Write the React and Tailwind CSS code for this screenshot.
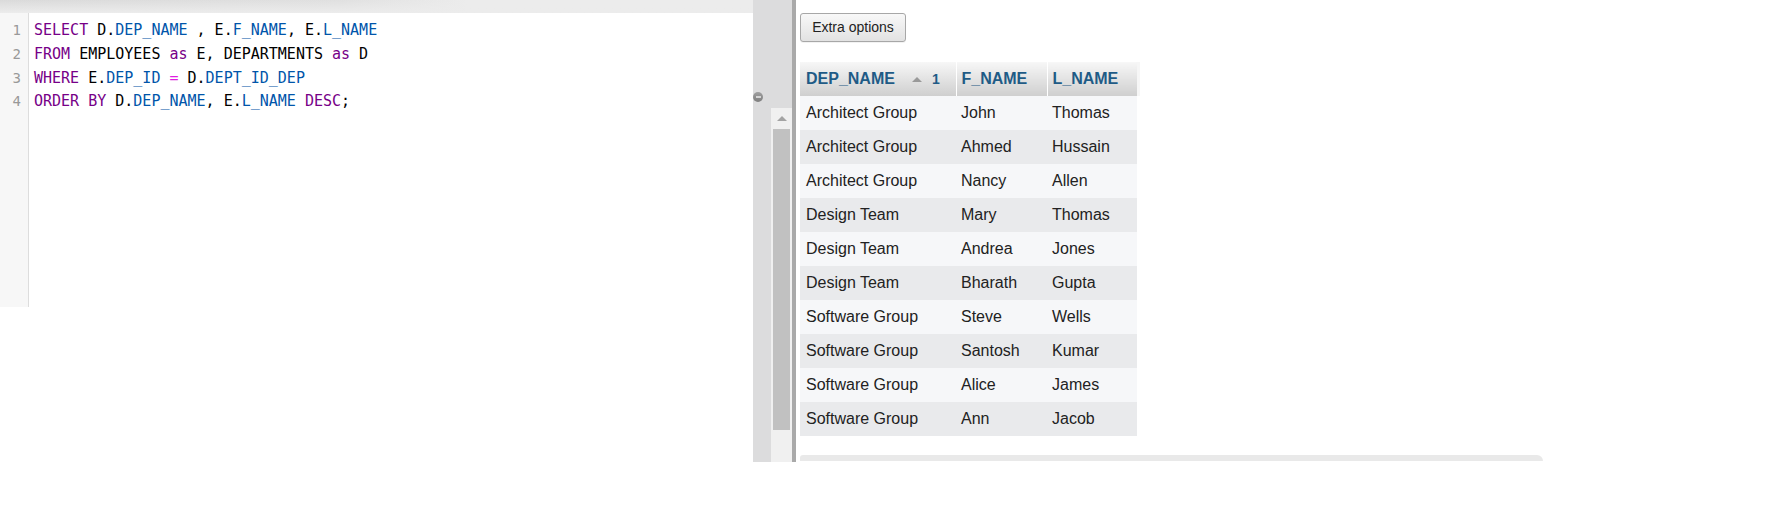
import React from "react";

const rows = [
  ["Architect Group", "John", "Thomas"],
  ["Architect Group", "Ahmed", "Hussain"],
  ["Architect Group", "Nancy", "Allen"],
  ["Design Team", "Mary", "Thomas"],
  ["Design Team", "Andrea", "Jones"],
  ["Design Team", "Bharath", "Gupta"],
  ["Software Group", "Steve", "Wells"],
  ["Software Group", "Santosh", "Kumar"],
  ["Software Group", "Alice", "James"],
  ["Software Group", "Ann", "Jacob"],
];

const K = ({ children }) => <span className="text-[#770088]">{children}</span>;
const V = ({ children }) => <span className="text-[#0055aa]">{children}</span>;
const O = ({ children }) => <span className="text-[#e01ee0]">{children}</span>;

export default function App() {
  return (
    <div className="w-[1788px] h-[523px] bg-white flex overflow-hidden font-['Liberation_Sans',Arial,sans-serif]">
      {/* Left editor column */}
      <div className="w-[753px] flex flex-col">
        <div className="h-[13px] bg-[#ececec] relative">
          <div className="absolute inset-0 bg-[linear-gradient(90deg,#dadada_0%,#e0e0e0_45%,#ececec_62%)]" />
          <div className="absolute inset-0 bg-gradient-to-b from-transparent to-[#ececec]" />
        </div>
        <div className="flex h-[294px]">
          <div className="w-[29px] bg-[#f7f7f7] border-r border-[#dddddd] pt-[6px] flex flex-col items-end pr-[7px] font-['DejaVu_Sans_Mono',monospace] text-[14px] leading-[23.8px] text-[#999999]">
            <div>1</div>
            <div>2</div>
            <div>3</div>
            <div>4</div>
          </div>
          <div className="flex-1 pl-[5px] pt-[6px] font-['DejaVu_Sans_Mono',monospace] text-[15px] leading-[23.8px] text-black whitespace-pre">
            <div>
              <K>SELECT</K> D.<V>DEP_NAME</V> , E.<V>F_NAME</V>, E.<V>L_NAME</V>
            </div>
            <div>
              <K>FROM</K> EMPLOYEES <K>as</K> E, DEPARTMENTS <K>as</K> D
            </div>
            <div>
              <K>WHERE</K> E.<V>DEP_ID</V> <O>=</O> D.<V>DEPT_ID_DEP</V>
            </div>
            <div>
              <K>ORDER</K> <K>BY</K> D.<V>DEP_NAME</V>, E.<V>L_NAME</V> <K>DESC</K>;
            </div>
          </div>
        </div>
      </div>

      {/* Divider with scrollbar */}
      <div className="w-[39px] h-[462px] bg-[#dcdcdd] flex flex-col">
        <div className="h-[92px]" />
        <div className="flex">
          <div className="w-[10px] h-[10px] rounded-full bg-gradient-to-b from-[#a0a0a0] to-[#7e7e7e] flex items-center justify-center">
            <div className="w-[5px] h-[2px] bg-[#d4d4d4]" />
          </div>
        </div>
        <div className="h-[6px]" />
        <div className="flex flex-1">
          <div className="w-[18px]" />
          <div className="w-[21px] bg-[#f0f0f0] flex flex-col items-center">
            <div className="h-[21px] flex items-center justify-center">
              <div className="w-0 h-0 border-l-[5px] border-r-[5px] border-b-[5px] border-l-transparent border-r-transparent border-b-[#a3a3a3]" />
            </div>
            <div className="w-[17px] h-[301px] bg-[#c1c1c1]" />
          </div>
        </div>
      </div>
      <div className="w-[4px] h-[462px] bg-[#a9a9a9]" />

      {/* Right panel */}
      <div className="flex flex-col pl-[4px] pt-[13px]">
        <button className="self-start w-[106px] h-[29px] rounded-[3px] border border-[#a7a7a7] bg-gradient-to-b from-[#f8f8f8] to-[#e2e2e2] text-[14px] text-[#222222] shadow-[0_1px_0_rgba(0,0,0,0.05)]">
          Extra options
        </button>
        <div className="h-[20px]" />
        <div className="flex">
          <table className="border-collapse text-[16px]">
            <thead>
              <tr className="h-[34px]">
                <th className="w-[156px] bg-gradient-to-b from-[#f7f7f7] to-[#cfcfcf] text-left pl-[6px] font-bold text-[#1f5b86] border-r border-white">
                  <div className="flex items-center">
                    <span>DEP_NAME</span>
                    <span className="ml-[17px] w-0 h-0 border-l-[5px] border-r-[5px] border-b-[5px] border-l-transparent border-r-transparent border-b-[#999999]" />
                    <span className="ml-[10px] text-[14px]">1</span>
                  </div>
                </th>
                <th className="w-[91px] bg-gradient-to-b from-[#f7f7f7] to-[#cfcfcf] text-left pl-[5px] font-bold text-[#1f5b86] border-r border-white">
                  F_NAME
                </th>
                <th className="w-[90px] bg-gradient-to-b from-[#f7f7f7] to-[#cfcfcf] text-left pl-[5px] font-bold text-[#1f5b86]">
                  L_NAME
                </th>
              </tr>
            </thead>
            <tbody>
              {rows.map((r, i) => (
                <tr key={i} className={`h-[34px] text-[#222222] ${i % 2 === 0 ? "bg-[#f6f7f9]" : "bg-[#e9eaec]"}`}>
                  <td className="pl-[6px]">{r[0]}</td>
                  <td className="pl-[5px]">{r[1]}</td>
                  <td className="pl-[5px]">{r[2]}</td>
                </tr>
              ))}
            </tbody>
          </table>
          <div className="w-[3px] h-[34px] bg-[#f6f6f6]" />
        </div>
        <div className="h-[19px]" />
        <div className="w-[743px] h-[6px] bg-[#e9e9e9] rounded-tr-[6px] rounded-tl-[3px]" />
      </div>
    </div>
  );
}
